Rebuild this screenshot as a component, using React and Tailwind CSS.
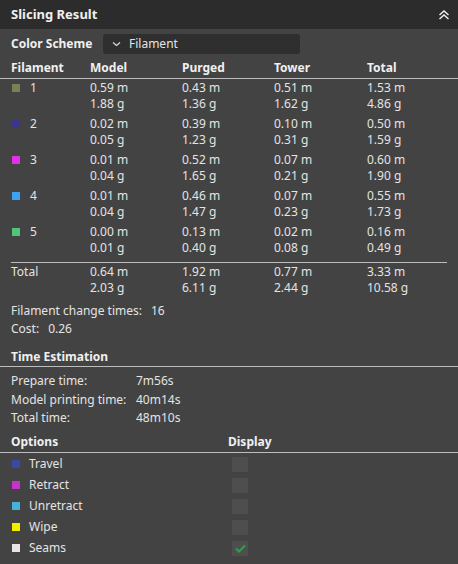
import React from "react";

const filaments = [
  { id: "1", color: "#7b7f55", model: ["0.59 m", "1.88 g"], purged: ["0.43 m", "1.36 g"], tower: ["0.51 m", "1.62 g"], total: ["1.53 m", "4.86 g"] },
  { id: "2", color: "#3b3688", model: ["0.02 m", "0.05 g"], purged: ["0.39 m", "1.23 g"], tower: ["0.10 m", "0.31 g"], total: ["0.50 m", "1.59 g"] },
  { id: "3", color: "#e22fe8", model: ["0.01 m", "0.04 g"], purged: ["0.52 m", "1.65 g"], tower: ["0.07 m", "0.21 g"], total: ["0.60 m", "1.90 g"] },
  { id: "4", color: "#3ea2f2", model: ["0.01 m", "0.04 g"], purged: ["0.46 m", "1.47 g"], tower: ["0.07 m", "0.23 g"], total: ["0.55 m", "1.73 g"] },
  { id: "5", color: "#4fc57a", model: ["0.00 m", "0.01 g"], purged: ["0.13 m", "0.40 g"], tower: ["0.02 m", "0.08 g"], total: ["0.16 m", "0.49 g"] },
];

const options = [
  { name: "Travel", color: "#3a48a6", checked: false },
  { name: "Retract", color: "#c832cc", checked: false },
  { name: "Unretract", color: "#45b2d6", checked: false },
  { name: "Wipe", color: "#f2ee00", checked: false },
  { name: "Seams", color: "#e6e6e6", checked: true },
];

function Pair({ v }) {
  return (
    <div className="flex flex-col">
      <span className="h-[16px] leading-[16px]">{v[0]}</span>
      <span className="h-[16px] leading-[16px]">{v[1]}</span>
    </div>
  );
}

const cols = "grid grid-cols-[79px_92px_92px_93px_1fr]";

export default function App() {
  return (
    <div
      className="w-[458px] h-[564px] bg-[#434343] text-[#e4e4e4] text-[12px] overflow-hidden"
      style={{ fontFamily: '"Noto Sans", "Open Sans", sans-serif' }}
    >
      {/* title bar */}
      <div className="h-[29px] bg-[#2c2c2c] flex items-center justify-between pl-[11px] pr-[8px]">
        <span className="font-bold text-[13px] text-[#f0f0f0]">Slicing Result</span>
        <svg width="12" height="12" viewBox="0 0 12 12" fill="none" stroke="#f0f0f0" strokeWidth="1.4">
          <path d="M1.5 6 L6 2 L10.5 6" />
          <path d="M1.5 10 L6 6 L10.5 10" />
        </svg>
      </div>

      {/* color scheme */}
      <div className="h-[29px] flex items-center pl-[11px]">
        <span className="font-bold text-[#f0f0f0] w-[92px]">Color Scheme</span>
        <div className="w-[197px] h-[20px] bg-[#2f2f2f] rounded-[3px] flex items-center pl-[9px] gap-[8px]">
          <svg width="9" height="6" viewBox="0 0 9 6" fill="none" stroke="#dcdcdc" strokeWidth="1.2">
            <path d="M1 1.5 L4.5 4.5 L8 1.5" />
          </svg>
          <span>Filament</span>
        </div>
      </div>

      {/* table header */}
      <div className={`${cols} h-[21px] items-center pl-[11px] font-bold text-[#f0f0f0] border-b border-[#bdbdbd]`}>
        <span>Filament</span>
        <span>Model</span>
        <span>Purged</span>
        <span>Tower</span>
        <span>Total</span>
      </div>

      {/* filament rows */}
      <div className="pt-[1px]">
        {filaments.map((f) => (
          <div key={f.id} className={`${cols} h-[36px] pl-[11px]`}>
            <div className="flex items-start">
              <span className="h-[16px] flex items-center gap-[10px]">
                <span className="w-[8px] h-[8px] ml-[1px]" style={{ backgroundColor: f.color }} />
                <span>{f.id}</span>
              </span>
            </div>
            <Pair v={f.model} />
            <Pair v={f.purged} />
            <Pair v={f.tower} />
            <Pair v={f.total} />
          </div>
        ))}
      </div>

      {/* totals */}
      <div className="ml-[11px] mr-[11px] mt-[2px] border-t border-[#bdbdbd]" />
      <div className={`${cols} h-[36px] pl-[11px] pt-[1px]`}>
        <span className="leading-[16px]">Total</span>
        <Pair v={["0.64 m", "2.03 g"]} />
        <Pair v={["1.92 m", "6.11 g"]} />
        <Pair v={["0.77 m", "2.44 g"]} />
        <Pair v={["3.33 m", "10.58 g"]} />
      </div>

      <div className="pl-[11px] mt-[3px]">
        <div className="h-[18px] leading-[18px]">
          Filament change times:<span className="ml-[9px]">16</span>
        </div>
        <div className="h-[18px] leading-[18px]">
          Cost:<span className="ml-[9px]">0.26</span>
        </div>
      </div>

      {/* time estimation */}
      <div className="h-[20px] mt-[9px] pl-[11px] flex items-center font-bold text-[#f0f0f0] border-b border-[#bdbdbd]">
        Time Estimation
      </div>
      <div className="pl-[11px] pt-[5px]">
        {[
          ["Prepare time:", "7m56s"],
          ["Model printing time:", "40m14s"],
          ["Total time:", "48m10s"],
        ].map(([k, v]) => (
          <div key={k} className="grid grid-cols-[125px_1fr] h-[18.5px] leading-[18.5px]">
            <span>{k}</span>
            <span>{v}</span>
          </div>
        ))}
      </div>

      {/* options */}
      <div className="grid grid-cols-[217px_1fr] h-[20px] mt-[5px] pl-[11px] items-center font-bold text-[#f0f0f0] border-b border-[#bdbdbd]">
        <span>Options</span>
        <span>Display</span>
      </div>
      <div className="pt-[1px]">
        {options.map((o) => (
          <div key={o.name} className="grid grid-cols-[220px_1fr] h-[21px] items-center pl-[12px]">
            <div className="flex items-center gap-[9px]">
              <span className="w-[8px] h-[8px]" style={{ backgroundColor: o.color }} />
              <span>{o.name}</span>
            </div>
            <div className="w-[16px] h-[15px] bg-[#4e4e4e] flex items-center justify-center">
              {o.checked && (
                <svg width="11" height="9" viewBox="0 0 11 9" fill="none" stroke="#27a446" strokeWidth="2">
                  <path d="M1 4.5 L4 7.5 L10 1.5" />
                </svg>
              )}
            </div>
          </div>
        ))}
      </div>
    </div>
  );
}
